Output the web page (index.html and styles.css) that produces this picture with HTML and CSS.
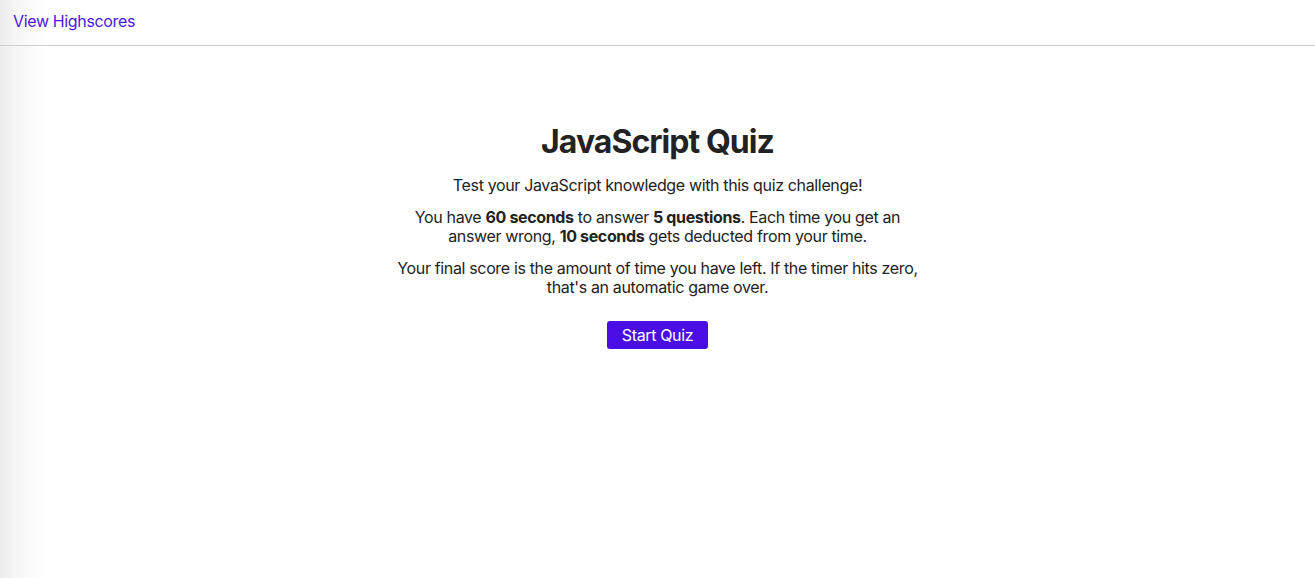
FILE: index.html
```html
<!DOCTYPE html>
<html lang="en">
<head>
<meta charset="utf-8">
<title>JavaScript Quiz</title>
<link rel="stylesheet" href="styles.css">
</head>
<body>
<header class="topbar">
  <a class="highscores" href="#">View Highscores</a>
</header>
<main class="intro">
  <h1 class="title">JavaScript Quiz</h1>
  <p class="text">Test your JavaScript knowledge with this quiz challenge!</p>
  <p class="text">You have <strong>60 seconds</strong> to answer <strong>5 questions</strong>. Each time you get an answer wrong, <strong>10 seconds</strong> gets deducted from your time.</p>
  <p class="text">Your final score is the amount of time you have left. If the timer hits zero, that's an automatic game over.</p>
  <button class="start" type="button">Start Quiz</button>
</main>
</body>
</html>
```
FILE: styles.css
```css
html, body {
  margin: 0;
  padding: 0;
  height: 100%;
}
body {
  font-family: Inter, "Noto Sans", sans-serif;
  color: #222;
  background: linear-gradient(to right, #ececec 0px, #f7f7f7 18px, #ffffff 48px);
  font-size: 16px;
  letter-spacing: -0.022em;
}
.topbar {
  height: 45px;
  display: flex;
  align-items: center;
  padding: 0 13px;
  border-bottom: 1px solid #cfcfcf;
}
.highscores {
  color: #4a18e2;
  text-decoration: none;
  font-size: 16px;
  margin-top: -4px;
}
.intro {
  display: flex;
  flex-direction: column;
  align-items: center;
  text-align: center;
  padding-top: 76px;
  max-width: 540px;
  margin: 0 auto;
}
.title {
  font-size: 32px;
  font-weight: 700;
  letter-spacing: -0.03em;
  margin: 0 0 15px;
  color: #222;
}
.text {
  margin: 0 0 13px;
  line-height: 19px;
}
.text strong {
  font-weight: 700;
}
.start {
  margin-top: 11px;
  background: #4a0de6;
  color: #fff;
  border: none;
  border-radius: 3px;
  font-family: Inter, "Noto Sans", sans-serif;
  font-size: 16px;
  letter-spacing: -0.022em;
  width: 101px;
  height: 28px;
  padding: 0;
  cursor: pointer;
}
```
